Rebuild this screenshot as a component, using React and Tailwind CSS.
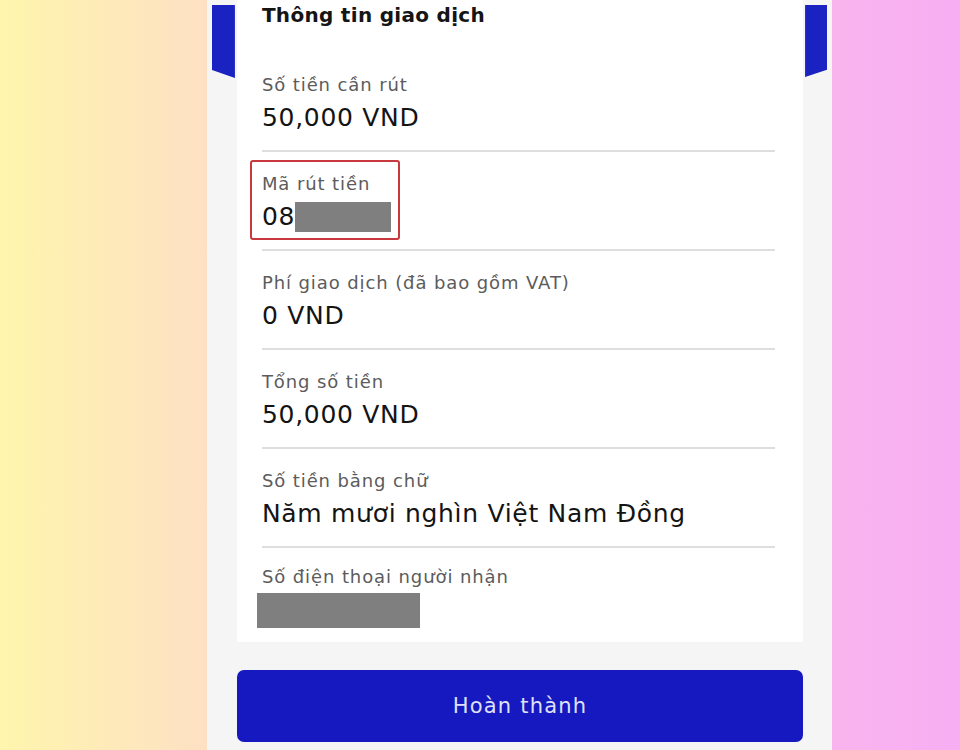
import React from "react";

const rows = [
  { label: "Số tiền cần rút", value: "50,000 VND" },
  { label: "Mã rút tiền", value: "08", masked: true, marked: true },
  { label: "Phí giao dịch (đã bao gồm VAT)", value: "0 VND" },
  { label: "Tổng số tiền", value: "50,000 VND" },
  { label: "Số tiền bằng chữ", value: "Năm mươi nghìn Việt Nam Đồng" },
];

const InfoRow = ({ label, value, masked, marked }) => (
  <div className="relative pt-[20px] pb-[16px] border-b-2 border-[#dedede]">
    {marked && (
      <div className="absolute left-[-12px] top-[8px] w-[150px] h-[80px] border-2 border-[#c9383d] rounded-[3px]" />
    )}
    <p className="text-[18px] leading-[24px] tracking-[0.9px] text-[#5c5c5c]">{label}</p>
    <div className="mt-[5px] flex items-center text-[25px] leading-[32px] tracking-[0.7px] text-[#141414]">
      <span>{value}</span>
      {masked && <span className="inline-block w-[96px] h-[30px] bg-[#7f7f7f]" />}
    </div>
  </div>
);

const App = () => {
  return (
    <div
      className="w-full h-[750px] overflow-hidden bg-[linear-gradient(to_right,#fff5ad_0%,#fde1c3_21%,#fbc6dc_55%,#f9b4ee_87%,#f8aef3_100%)]"
      style={{ fontFamily: "'DejaVu Sans', 'Open Sans', sans-serif" }}
    >
      <div className="ml-[207px] w-[625px] h-full bg-[#f5f5f6] flex flex-col">
        <div className="flex items-start px-[5px] gap-[2px]">
          {/* left header stripe */}
          <div className="mt-[5px] w-[23px] h-[73px] bg-[#1b22c2] [clip-path:polygon(0_0,100%_0,100%_100%,0_89%)]" />

          {/* Transaction card */}
          <div className="w-[568px] bg-white pl-[25px] pr-[28px] pb-[14px]">
            <h2 className="h-[53px] pt-[2px] text-[20px] leading-[26px] tracking-[0.3px] font-bold text-[#151515]">
              Thông tin giao dịch
            </h2>
            {rows.map((row) => (
              <InfoRow key={row.label} {...row} />
            ))}
            <div className="pt-[17px]">
              <p className="text-[18px] leading-[24px] tracking-[0.9px] text-[#5c5c5c]">Số điện thoại người nhận</p>
              <div className="mt-[4px] -ml-[5px] w-[163px] h-[35px] bg-[#7f7f7f]" />
            </div>
          </div>

          {/* right header stripe */}
          <div className="mt-[5px] w-[22px] h-[72px] bg-[#1b22c2] [clip-path:polygon(0_0,100%_0,100%_90%,0_100%)]" />
        </div>

        <div className="mt-[28px] pl-[30px]">
          <button className="w-[566px] h-[72px] rounded-[7px] bg-[#1619c0] text-[#dfe1f8] text-[21px] tracking-[1.2px] pt-[2px]">
            Hoàn thành
          </button>
        </div>
      </div>
    </div>
  );
};

export default App;
